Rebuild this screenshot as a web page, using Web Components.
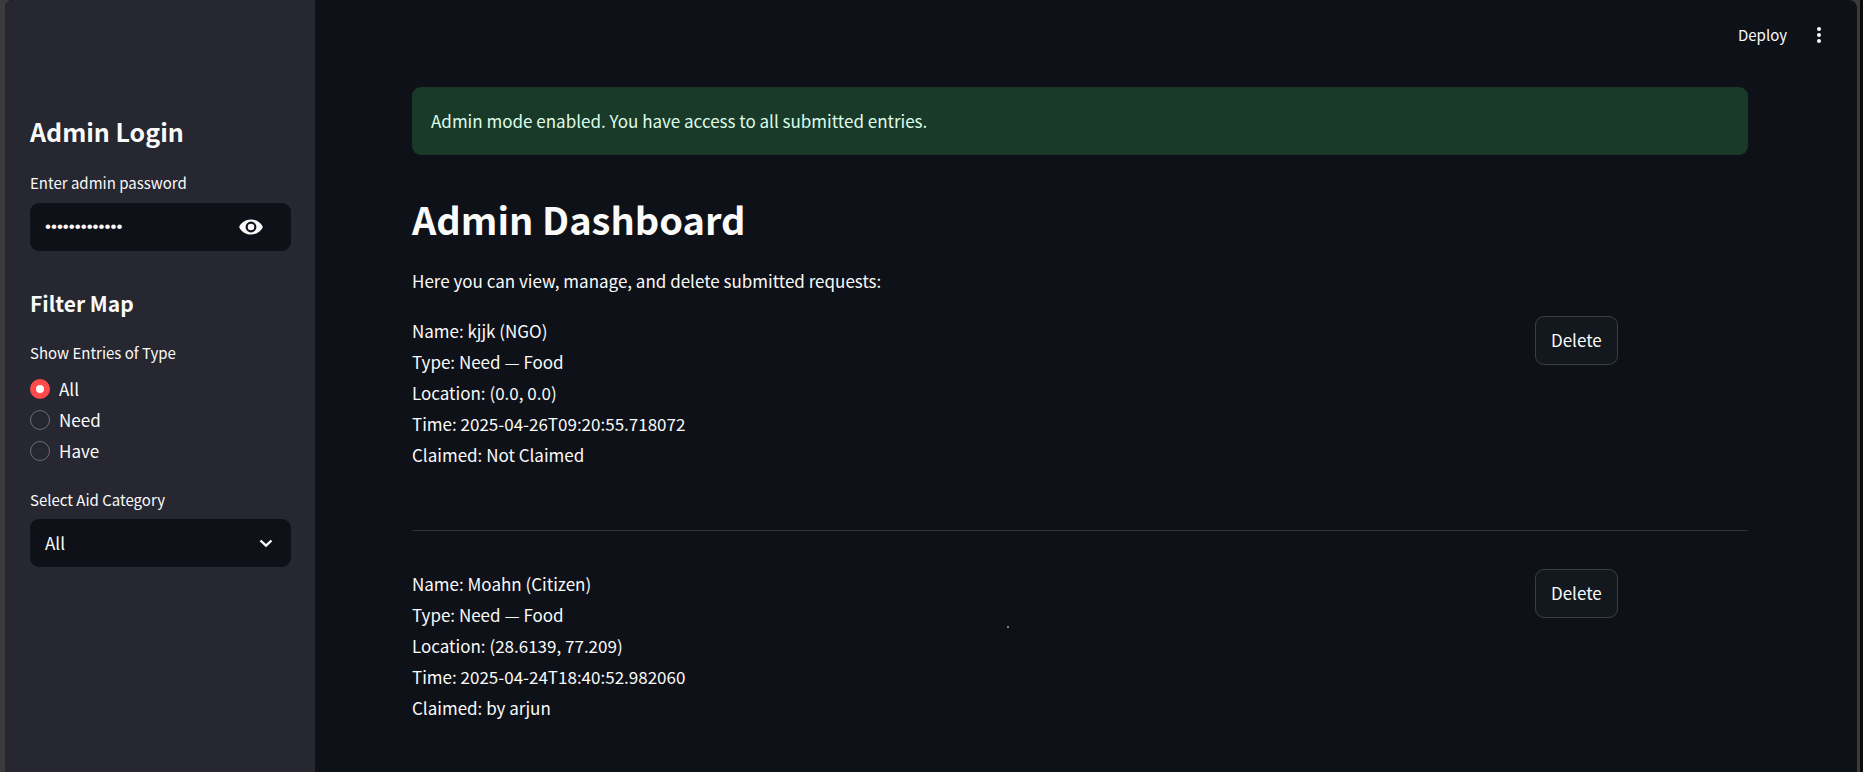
<!DOCTYPE html>
<html lang="en">
<head>
<meta charset="utf-8">
<title>Admin Dashboard</title>
<style>
  html { background: #0b0b0b; }
  body {
    margin: 0;
    color: #fafafa;
    font: 17px/31px "Noto Sans CJK SC", "Noto Sans", sans-serif;
    --bg: #0e1117;
    --panel: #262730;
    --field: #0e1117;
    --line: #303238;
    --accent: #ff4b4b;
  }
</style>
</head>
<body>
<app-shell>
  <side-bar slot="sidebar">
    <side-title>Admin Login</side-title>
    <password-field label="Enter admin password" value="correct-horse"></password-field>
    <side-title small>Filter Map</side-title>
    <radio-group label="Show Entries of Type" options="All,Need,Have" selected="All"></radio-group>
    <select-field label="Select Aid Category" options="All,Food,Water,Shelter,Medical"></select-field>
  </side-bar>
  <tool-bar slot="toolbar"></tool-bar>
  <success-alert>Admin mode enabled. You have access to all submitted entries.</success-alert>
  <page-heading>Admin Dashboard
    <span slot="intro">Here you can view, manage, and delete submitted requests:</span>
  </page-heading>
  <request-entry>
    <span slot="name">kjjk (NGO)</span><span slot="type">Need — Food</span><span slot="location">(0.0, 0.0)</span><span slot="time">2025-04-26T09:20:55.718072</span><span slot="claimed">Not Claimed</span>
  </request-entry>
  <request-entry>
    <span slot="name">Moahn (Citizen)</span><span slot="type">Need — Food</span><span slot="location">(28.6139, 77.209)</span><span slot="time">2025-04-24T18:40:52.982060</span><span slot="claimed">by arjun</span>
    <pointer-dot slot="overlay"></pointer-dot>
  </request-entry>
</app-shell>

<script>
  function define(name, html, setup) {
    customElements.define(name, class extends HTMLElement {
      connectedCallback() {
        if (this.shadowRoot) return;
        const root = this.attachShadow({ mode: 'open' });
        const template = document.createElement('template');
        template.innerHTML = html;
        root.append(template.content.cloneNode(true));
        if (setup) setup(this, root);
      }
    });
  }

  define('app-shell', `
    <style>
      :host { display: block; box-sizing: border-box; min-height: 100vh; margin-right: 3px; padding: 0 3px 0 5px; background: #3b3b3b; }
      .window { display: flex; min-height: 100vh; border-radius: 8px 8px 0 0; overflow: hidden; background: var(--bg); }
      main { flex: 1; min-width: 0; }
      .content { padding: 17px 109px 0 97px; }
    </style>
    <div class="window">
      <slot name="sidebar"></slot>
      <main>
        <slot name="toolbar"></slot>
        <div class="content"><slot></slot></div>
      </main>
    </div>`);

  define('side-bar', `
    <style>
      :host { display: block; flex: 0 0 310px; min-width: 0; box-sizing: border-box; padding: 111px 24px 0 25px; background: var(--panel); }
    </style>
    <aside><slot></slot></aside>`);

  define('side-title', `
    <style>
      :host { display: block; }
      h2 { margin: 0 0 16px; font-size: 25px; line-height: 40px; font-weight: 600; }
      :host([small]) { padding-top: 36px; }
      :host([small]) h2 { font-size: 21px; line-height: 32px; margin-bottom: 18px; }
    </style>
    <h2><slot></slot></h2>`);

  define('password-field', `
    <style>
      :host { display: block; }
      label { display: block; font-size: 15px; line-height: 32px; margin-bottom: 4px; }
      .box { display: flex; align-items: center; height: 48px; padding: 0 15px; border-radius: 9px; background: var(--field); }
      input { flex: 1; min-width: 0; padding: 0; border: 0; outline: 0; background: none; color: inherit; font: 17px/24px "Liberation Sans", sans-serif; }
      button { display: flex; padding: 0 12px; border: 0; background: none; color: inherit; }
    </style>
    <label for="field"></label>
    <div class="box">
      <input id="field" type="password">
      <button type="button" aria-label="Show password">
        <svg width="26" height="26" viewBox="0 0 24 24" fill="currentColor"><path d="M12 5C7 5 2.700 8 1 12c1.700 4 6 7 11 7s9.300-3 11-7c-1.700-4-6-7-11-7zm0 12a5 5 0 1 1 0-10 5 5 0 0 1 0 10zm0-8a3 3 0 1 0 0 6 3 3 0 0 0 0-6z"/></svg>
      </button>
    </div>`, (host, root) => {
      root.querySelector('label').textContent = host.getAttribute('label');
      root.querySelector('input').value = host.getAttribute('value');
    });

  define('radio-group', `
    <style>
      :host { display: block; }
      fieldset { margin: 0; padding: 0; border: 0; }
      legend { padding: 0; margin-bottom: 4px; font-size: 15px; line-height: 32px; }
      label { display: flex; align-items: center; gap: 9px; line-height: 31px; }
      input { appearance: none; box-sizing: border-box; width: 20px; height: 20px; margin: 0; border: 1px solid #6d6e76; border-radius: 50%; }
      input:checked { border: 6px solid var(--accent); background: #fafafa; }
    </style>
    <fieldset><legend></legend></fieldset>`, (host, root) => {
      root.querySelector('legend').textContent = host.getAttribute('label');
      for (const option of host.getAttribute('options').split(',')) {
        const label = document.createElement('label');
        const input = document.createElement('input');
        input.type = 'radio';
        input.name = 'type';
        input.value = option;
        input.checked = option === host.getAttribute('selected');
        label.append(input, option);
        root.querySelector('fieldset').append(label);
      }
    });

  define('select-field', `
    <style>
      :host { display: block; padding-top: 18px; }
      label { display: block; font-size: 15px; line-height: 32px; margin-bottom: 3px; }
      .box { display: grid; align-items: center; border-radius: 9px; background: var(--field); }
      .box > * { grid-area: 1 / 1; }
      select { appearance: none; width: 100%; height: 48px; padding: 0 48px 2px 15px; border: 0; border-radius: 9px; background: none; color: inherit; font: inherit; }
      svg { justify-self: end; margin-right: 13px; pointer-events: none; }
    </style>
    <label for="field"></label>
    <div class="box">
      <select id="field"></select>
      <svg width="24" height="24" viewBox="0 0 24 24" fill="none" stroke="currentColor" stroke-width="2.400"><path d="M6.500 9.500l5.500 5.200 5.500-5.200"/></svg>
    </div>`, (host, root) => {
      root.querySelector('label').textContent = host.getAttribute('label');
      for (const option of host.getAttribute('options').split(',')) root.querySelector('select').add(new Option(option));
    });

  define('tool-bar', `
    <style>
      :host { display: block; }
      header { display: flex; justify-content: flex-end; align-items: center; gap: 20px; height: 70px; padding-right: 26px; }
      button { display: flex; padding: 0; border: 0; background: none; color: inherit; font: inherit; font-size: 15px; line-height: 24px; }
    </style>
    <header>
      <button type="button">Deploy</button>
      <button type="button" aria-label="Main menu">
        <svg width="24" height="24" viewBox="0 0 24 24" fill="currentColor"><circle cx="12" cy="6" r="2"/><circle cx="12" cy="12" r="2"/><circle cx="12" cy="18" r="2"/></svg>
      </button>
    </header>`);

  define('success-alert', `
    <style>
      :host { display: block; padding: 18px 19px; border-radius: 9px; background: #193a29; color: #dffde9; line-height: 32px; }
    </style>
    <div role="status"><slot></slot></div>`);

  define('page-heading', `
    <style>
      :host { display: block; padding-top: 34px; }
      h1 { margin: 0; font-size: 38px; line-height: 60px; font-weight: 600; }
      p { margin: 16px 0 19px; }
    </style>
    <h1><slot></slot></h1>
    <p><slot name="intro"></slot></p>`);

  define('request-entry', `
    <style>
      :host { display: block; position: relative; }
      :host(:not(:last-of-type)) { border-bottom: 1px solid var(--line); padding-bottom: 60px; margin-bottom: 37px; }
      article { display: grid; grid-template-columns: 5fr 1fr; gap: 58px; align-items: start; }
      button { justify-self: start; height: 49px; margin: 1px 0 0; padding: 0 15px 2px; border: 1px solid #3c3e45; border-radius: 9px; background: #13171e; color: inherit; font: inherit; }
    </style>
    <article>
      <div>
        <div>Name: <slot name="name"></slot></div>
        <div>Type: <slot name="type"></slot></div>
        <div>Location: <slot name="location"></slot></div>
        <div>Time: <slot name="time"></slot></div>
        <div>Claimed: <slot name="claimed"></slot></div>
      </div>
      <button type="button">Delete</button>
    </article>
    <slot name="overlay"></slot>`);

  define('pointer-dot', `
    <style>
      :host { position: absolute; left: 595px; top: 58px; width: 2px; height: 2px; border-radius: 1px; background: #a0a2a6; }
    </style>`);
</script>
</body>
</html>
